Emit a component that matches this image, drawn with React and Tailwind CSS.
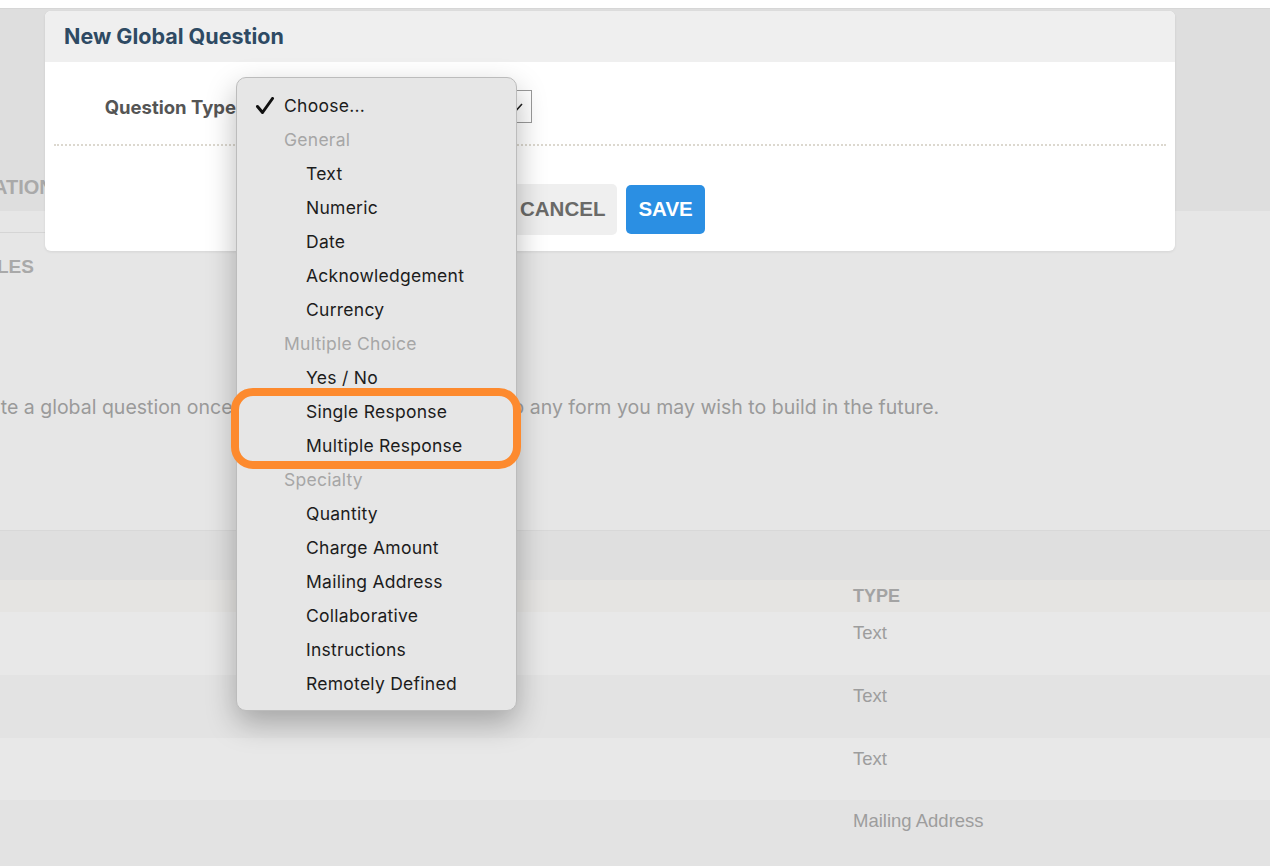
import React from "react";

const groups = [
  { type: "choose", label: "Choose..." },
  { type: "group", label: "General" },
  { type: "item", label: "Text" },
  { type: "item", label: "Numeric" },
  { type: "item", label: "Date" },
  { type: "item", label: "Acknowledgement" },
  { type: "item", label: "Currency" },
  { type: "group", label: "Multiple Choice" },
  { type: "item", label: "Yes / No" },
  { type: "item", label: "Single Response" },
  { type: "item", label: "Multiple Response" },
  { type: "group", label: "Specialty" },
  { type: "item", label: "Quantity" },
  { type: "item", label: "Charge Amount" },
  { type: "item", label: "Mailing Address" },
  { type: "item", label: "Collaborative" },
  { type: "item", label: "Instructions" },
  { type: "item", label: "Remotely Defined" },
];

function Check() {
  return (
    <svg width="20" height="18" viewBox="0 0 20 18" className="shrink-0">
      <path d="M2.5 9.5 L7.5 15.5 L17.5 1.5" fill="none" stroke="#111" strokeWidth="3" strokeLinecap="round" strokeLinejoin="round" />
    </svg>
  );
}

function Dropdown() {
  return (
    <div className="absolute left-[236px] top-[77px] w-[281px] h-[634px] rounded-[10px] bg-[#e6e6e6] border border-[#bcbcbc] shadow-[0_12px_30px_rgba(0,0,0,0.28)] pt-[11px] font-['Inter',sans-serif] text-[17.5px] tracking-[0.015em] leading-[22px]">
      {groups.map((g, i) => (
        <div key={i} className="h-[34px] flex items-center">
          {g.type === "choose" && (
            <div className="flex items-center pl-[18px] text-[#1c1c1c]">
              <Check />
              <span className="ml-[9px]">{g.label}</span>
            </div>
          )}
          {g.type === "group" && <span className="pl-[47px] text-[#a6a6a6]">{g.label}</span>}
          {g.type === "item" && <span className="pl-[69px] text-[#1c1c1c]">{g.label}</span>}
        </div>
      ))}
    </div>
  );
}

function Modal() {
  return (
    <div className="absolute left-[45px] top-[11px] w-[1130px] rounded-[6px] bg-white overflow-hidden shadow-[0_1px_3px_rgba(0,0,0,0.08)]">
      <div className="h-[51px] bg-[#efefef] flex items-center px-[19px]">
        <span className="font-['Inter',sans-serif] text-[21.5px] font-bold text-[#2e4a63]">New Global Question</span>
      </div>
      <div className="px-[9px] pb-[16px]">
        <div className="pt-[28px] flex items-center">
          <div className="w-[182px] text-right font-['Inter',sans-serif] text-[18.5px] font-bold text-[#555555] leading-[24px]">Question Type</div>
          <div className="ml-[12px] w-[284px] h-[33px] border border-[#9a9a9a] flex items-center justify-end pr-[8px]">
            <svg width="12" height="8" viewBox="0 0 12 8">
              <path d="M1 1 L6 6.5 L11 1" fill="none" stroke="#222" strokeWidth="1.6" />
            </svg>
          </div>
        </div>
        <div className="mt-[21px] border-t-2 border-dotted border-[#dcd8cf]" />
        <div className="mt-[38px] flex items-center gap-[9px] pl-[454px]">
          <div className="h-[51px] px-[12px] rounded-[5px] bg-[#efefef] flex items-center text-[20.5px] font-bold text-[#6a6a68]">CANCEL</div>
          <div className="h-[49px] px-[12px] rounded-[5px] bg-[#2b8fe3] flex items-center text-[20.5px] font-bold text-white">SAVE</div>
        </div>
      </div>
    </div>
  );
}

const rows = [
  { bg: "bg-[#e8e8e8]", h: "h-[63px]", t: "Text" },
  { bg: "bg-[#e3e3e3]", h: "h-[63px]", t: "Text" },
  { bg: "bg-[#e8e8e8]", h: "h-[62px]", t: "Text" },
  { bg: "bg-[#e3e3e3]", h: "h-[66px]", t: "Mailing Address" },
];

export default function App() {
  return (
    <div className="relative w-[1270px] h-[866px] overflow-hidden bg-[#e6e6e6] font-['Liberation_Sans',Arial,sans-serif]">
      <div className="h-[8px] bg-white" />
      <div className="h-[203px] bg-[#dedede] border-t border-[#d6d6d6] pt-[166px]">
        <div className="text-[20px] font-bold text-[#a9a9a9] -ml-[7px] leading-[24px]">ATION</div>
      </div>
      <div className="h-[319px] bg-[#e6e6e6]">
        <div className="h-[22px] w-[320px] border-b border-[#d5d5d5]" />
        <div className="pt-[22px] text-[19px] font-bold text-[#a9a9a9] -ml-[3px] leading-[24px]">LES</div>
        <div className="pt-[116px] font-['Inter',sans-serif] text-[19.5px] text-[#9a9a9a] leading-[24px] whitespace-nowrap -ml-[43px]">
          Create a global question once and you will be able to add it to any form you may wish to build in the future.
        </div>
      </div>
      <div className="h-[50px] bg-[#dfdfdf] border-t border-[#d8d8d8]" />
      <div className="h-[32px] bg-[#e5e4e2] flex items-center pl-[853px] text-[18px] font-bold text-[#a3a3a3]">TYPE</div>
      {rows.map((r, i) => (
        <div key={i} className={`${r.bg} ${r.h} pl-[853px] pt-[10px] text-[18.5px] text-[#9d9d9d] leading-[22px]`}>{r.t}</div>
      ))}

      <Modal />
      <Dropdown />
      <div className="absolute left-[231px] top-[388px] w-[290px] h-[81px] rounded-[22px] border-[8px] border-[#fd8a2e]" />
    </div>
  );
}
